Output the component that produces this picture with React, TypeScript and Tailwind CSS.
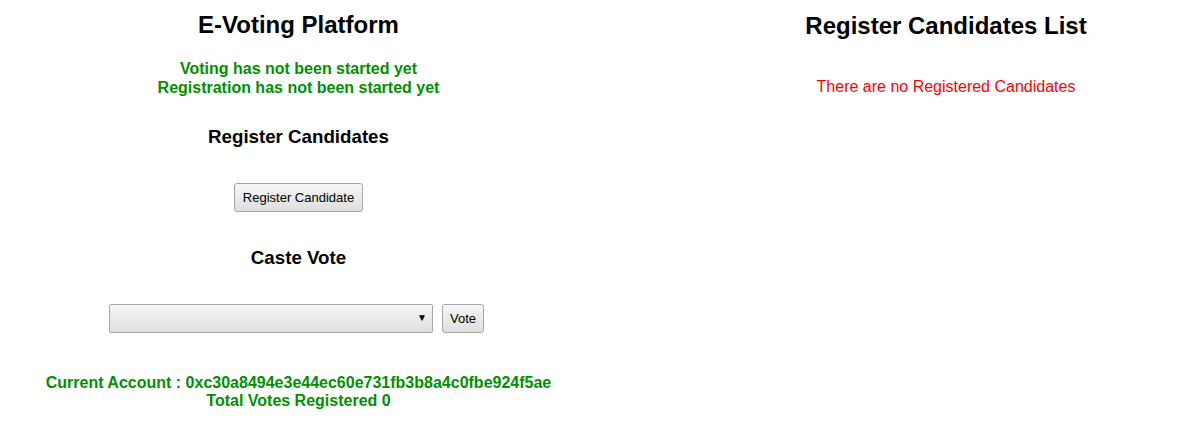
import { useState } from "react";

const ACCOUNT = "0xc30a8494e3e44ec60e731fb3b8a4c0fbe924f5ae";

/** Native-looking button, grey gradient like the default Chrome/Linux theme. */
function PlainButton({ children, wide }: { children: React.ReactNode; wide?: boolean }) {
  return (
    <button
      type="button"
      className={`h-[29px] rounded-[3px] border border-[#a6a6a6] bg-gradient-to-b from-[#f7f7f7] to-[#dedede] text-[13px] text-black ${
        wide ? "px-[8px]" : "px-[7px]"
      }`}
    >
      {children}
    </button>
  );
}

export default function App() {
  const [candidate, setCandidate] = useState("");

  return (
    <div className="flex w-[1195px] min-h-[437px] bg-white font-['Liberation_Sans',Arial,sans-serif] text-black">
      {/* Voting panel */}
      <div className="flex w-[597px] flex-col items-center text-center">
        <h2 className="pt-[11px] text-[24px] font-bold leading-[28px]">E-Voting Platform</h2>

        <div className="mt-[20px] text-[16px] font-bold leading-[19px] text-[#009000]">
          <p>Voting has not been started yet</p>
          <p>Registration has not been started yet</p>
        </div>

        <h3 className="mt-[29px] text-[18.72px] font-bold leading-[22px]">Register Candidates</h3>
        <div className="mt-[35px]">
          <PlainButton wide>Register Candidate</PlainButton>
        </div>

        <h3 className="mt-[35px] text-[18.72px] font-bold leading-[22px]">Caste Vote</h3>
        <div className="mt-[35px] flex items-center gap-[9px] pr-[4px]">
          <div className="relative">
            <select
              value={candidate}
              onChange={(e) => setCandidate(e.target.value)}
              className="h-[29px] w-[324px] appearance-none rounded-[2px] border border-[#a6a6a6] bg-gradient-to-b from-[#f7f7f7] to-[#dedede] px-2 text-[13px]"
            >
              <option value=""></option>
            </select>
            <span className="pointer-events-none absolute right-[6px] top-[6px] text-[10px] leading-[16px]">▼</span>
          </div>
          <PlainButton>Vote</PlainButton>
        </div>

        <div className="mt-[41px] text-[16px] font-bold leading-[18px] text-[#009000]">
          <p>Current Account : {ACCOUNT}</p>
          <p>Total Votes Registered 0</p>
        </div>
      </div>

      {/* Candidate list */}
      <div className="ml-[100px] flex flex-1 flex-col items-center text-center">
        <h2 className="pt-[12px] text-[24px] font-bold leading-[28px]">Register Candidates List</h2>
        <p className="mt-[38px] text-[16px] leading-[18px] text-[#ff0000]">
          There are no Registered Candidates
        </p>
      </div>
    </div>
  );
}
